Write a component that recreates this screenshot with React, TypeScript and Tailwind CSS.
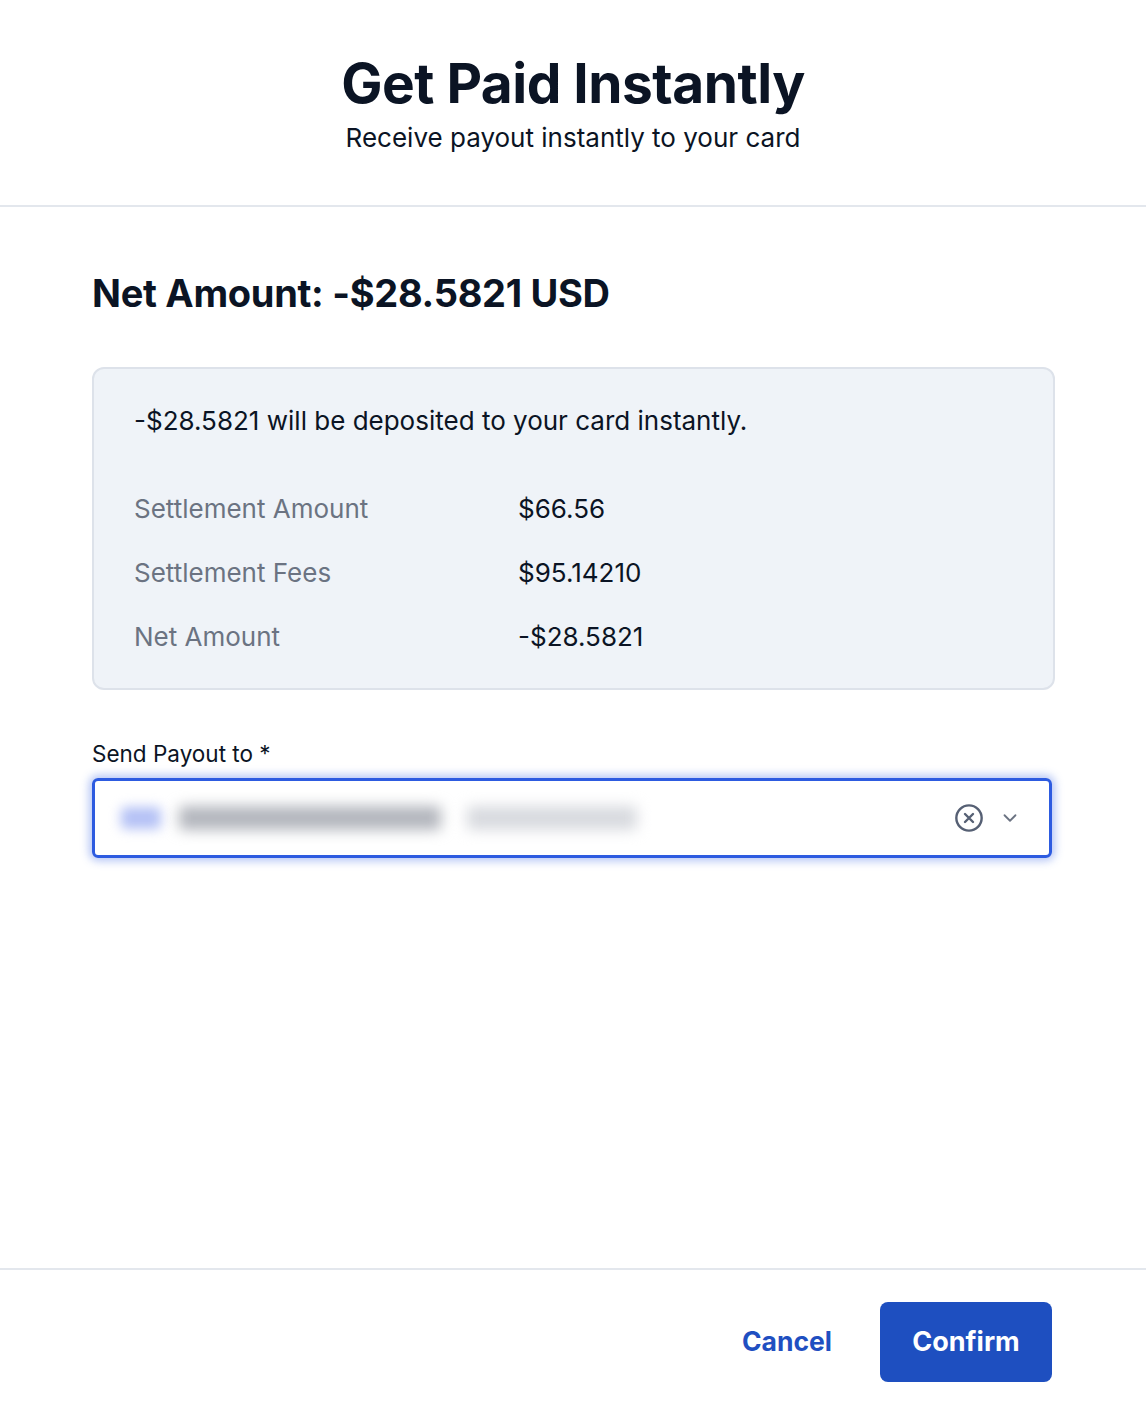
import React from "react";

export default function App() {
  return (
    <div className="w-[1146px] h-[1408px] bg-white flex flex-col" style={{ fontFamily: "Inter, 'Noto Sans', sans-serif" }}>
      <div className="h-[207px] flex flex-col items-center pt-[50px] border-b-2 border-[#e3e7ed] shrink-0">
        <h1 className="text-[55px] leading-[66px] font-bold text-[#0b1424] tracking-[-0.5px]">Get Paid Instantly</h1>
        <p className="text-[26px] leading-[34px] text-[#0b1424] mt-[5px]">Receive payout instantly to your card</p>
      </div>
      <div className="flex-1 px-[92px] pt-[64px]">
        <h2 className="text-[38px] leading-[44px] font-bold text-[#0b1424] tracking-[-0.3px]">Net Amount: -$28.5821 USD</h2>
        <div className="mt-[52px] w-[963px] h-[323px] rounded-[12px] border-2 border-[#dde2ea] bg-[#eff3f8] px-[40px] pt-[34px]">
          <p className="text-[26px] leading-[36px] text-[#0b1424]">-$28.5821 will be deposited to your card instantly.</p>
          <div className="mt-[52px] flex flex-col gap-[28px]">
            {[
              ["Settlement Amount", "$66.56"],
              ["Settlement Fees", "$95.14210"],
              ["Net Amount", "-$28.5821"],
            ].map(([l, v]) => (
              <div key={l} className="flex text-[26px] leading-[36px]">
                <span className="w-[384px] text-[#6b7382]">{l}</span>
                <span className="text-[#0b1424]">{v}</span>
              </div>
            ))}
          </div>
        </div>
        <label className="block mt-[48px] text-[22.5px] leading-[32px] text-[#0b1424]">Send Payout to *</label>
        <div className="mt-[8px] w-[960px] h-[80px] rounded-[6px] border-[3px] border-[#2d5be0] shadow-[0_0_8px_3px_rgba(70,110,230,0.4)] flex items-center pl-[26px] pr-[28px]">
          <div className="flex items-center gap-[18px] flex-1">
            <div className="w-[40px] h-[22px] rounded-[4px] bg-[#b4c1f5] blur-[6px]" />
            <div className="w-[262px] h-[24px] rounded-[4px] bg-[#b3b6bd] blur-[7px]" />
            <div className="w-[170px] h-[24px] rounded-[4px] bg-[#d8dadf] blur-[7px] ml-[8px]" />
          </div>
          <svg width="32" height="32" viewBox="0 0 24 24" fill="none" stroke="#566074" strokeWidth="1.8" strokeLinecap="round" className="mr-[14px]">
            <circle cx="12" cy="12" r="9.5" />
            <path d="M9 9l6 6M15 9l-6 6" />
          </svg>
          <svg width="22" height="22" viewBox="0 0 24 24" fill="none" stroke="#6b7382" strokeWidth="2" strokeLinecap="round" strokeLinejoin="round">
            <path d="M6 9l6 6 6-6" />
          </svg>
        </div>
      </div>
      <div className="h-[140px] border-t-2 border-[#e3e7ed] flex items-center justify-end pr-[94px] pt-[6px] shrink-0">
        <button className="text-[26.5px] font-bold text-[#1f4fc1] mr-[48px]">Cancel</button>
        <button className="w-[172px] h-[80px] rounded-[8px] bg-[#1e4fc0] text-white text-[27px] font-bold">Confirm</button>
      </div>
    </div>
  );
}
